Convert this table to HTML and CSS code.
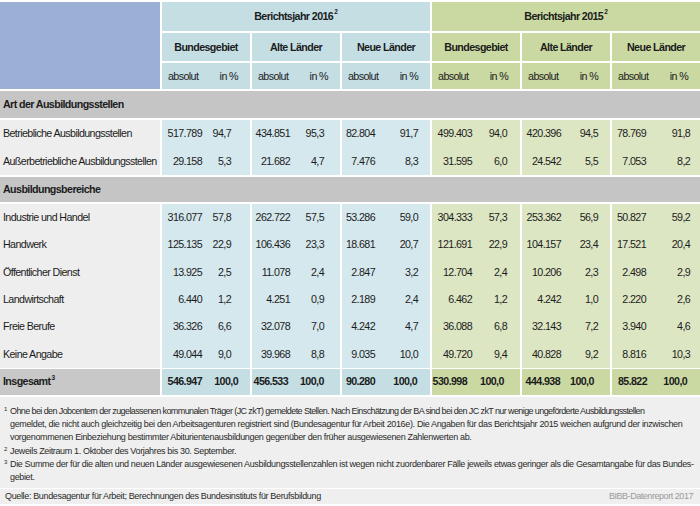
FILE: index.html
```html
<!DOCTYPE html>
<html lang="de">
<head>
<meta charset="utf-8">
<title>Ausbildungsstellen</title>
<link rel="stylesheet" href="styles.css">
</head>
<body>
<div class="page">
<table class="data">
<colgroup>
<col class="c-lab">
<col class="c-a"><col class="c-p"><col class="c-a"><col class="c-p"><col class="c-a"><col class="c-p">
<col class="c-a"><col class="c-p"><col class="c-a"><col class="c-p"><col class="c-a"><col class="c-p">
</colgroup>
<thead>
<tr class="h1">
<th rowspan="3" class="corner"></th>
<th colspan="6" class="y16">Berichtsjahr 2016<sup>2</sup></th>
<th colspan="6" class="y15">Berichtsjahr 2015<sup>2</sup></th>
</tr>
<tr class="h2">
<th colspan="2" class="y16">Bundesgebiet</th>
<th colspan="2" class="y16">Alte Länder</th>
<th colspan="2" class="y16">Neue Länder</th>
<th colspan="2" class="y15">Bundesgebiet</th>
<th colspan="2" class="y15">Alte Länder</th>
<th colspan="2" class="y15">Neue Länder</th>
</tr>
<tr class="h3">
<th class="y16 a">absolut</th><th class="y16 p">in %</th>
<th class="y16 a">absolut</th><th class="y16 p">in %</th>
<th class="y16 a">absolut</th><th class="y16 p">in %</th>
<th class="y15 a">absolut</th><th class="y15 p">in %</th>
<th class="y15 a">absolut</th><th class="y15 p">in %</th>
<th class="y15 a">absolut</th><th class="y15 p">in %</th>
</tr>
</thead>
<tbody>
<tr class="sec sec-first"><th colspan="13">Art der Ausbildungsstellen</th></tr>
<tr class="row tall">
<th>Betriebliche Ausbildungsstellen</th>
<td class="y16 a">517.789</td><td class="y16 p">94,7</td>
<td class="y16 a">434.851</td><td class="y16 p">95,3</td>
<td class="y16 a">82.804</td><td class="y16 p">91,7</td>
<td class="y15 a">499.403</td><td class="y15 p">94,0</td>
<td class="y15 a">420.396</td><td class="y15 p">94,5</td>
<td class="y15 a">78.769</td><td class="y15 p">91,8</td>
</tr>
<tr class="row tall">
<th>Außerbetriebliche Ausbildungsstellen</th>
<td class="y16 a">29.158</td><td class="y16 p">5,3</td>
<td class="y16 a">21.682</td><td class="y16 p">4,7</td>
<td class="y16 a">7.476</td><td class="y16 p">8,3</td>
<td class="y15 a">31.595</td><td class="y15 p">6,0</td>
<td class="y15 a">24.542</td><td class="y15 p">5,5</td>
<td class="y15 a">7.053</td><td class="y15 p">8,2</td>
</tr>
<tr class="sec"><th colspan="13">Ausbildungsbereiche</th></tr>
<tr class="row">
<th>Industrie und Handel</th>
<td class="y16 a">316.077</td><td class="y16 p">57,8</td>
<td class="y16 a">262.722</td><td class="y16 p">57,5</td>
<td class="y16 a">53.286</td><td class="y16 p">59,0</td>
<td class="y15 a">304.333</td><td class="y15 p">57,3</td>
<td class="y15 a">253.362</td><td class="y15 p">56,9</td>
<td class="y15 a">50.827</td><td class="y15 p">59,2</td>
</tr>
<tr class="row">
<th>Handwerk</th>
<td class="y16 a">125.135</td><td class="y16 p">22,9</td>
<td class="y16 a">106.436</td><td class="y16 p">23,3</td>
<td class="y16 a">18.681</td><td class="y16 p">20,7</td>
<td class="y15 a">121.691</td><td class="y15 p">22,9</td>
<td class="y15 a">104.157</td><td class="y15 p">23,4</td>
<td class="y15 a">17.521</td><td class="y15 p">20,4</td>
</tr>
<tr class="row">
<th>Öffentlicher Dienst</th>
<td class="y16 a">13.925</td><td class="y16 p">2,5</td>
<td class="y16 a">11.078</td><td class="y16 p">2,4</td>
<td class="y16 a">2.847</td><td class="y16 p">3,2</td>
<td class="y15 a">12.704</td><td class="y15 p">2,4</td>
<td class="y15 a">10.206</td><td class="y15 p">2,3</td>
<td class="y15 a">2.498</td><td class="y15 p">2,9</td>
</tr>
<tr class="row">
<th>Landwirtschaft</th>
<td class="y16 a">6.440</td><td class="y16 p">1,2</td>
<td class="y16 a">4.251</td><td class="y16 p">0,9</td>
<td class="y16 a">2.189</td><td class="y16 p">2,4</td>
<td class="y15 a">6.462</td><td class="y15 p">1,2</td>
<td class="y15 a">4.242</td><td class="y15 p">1,0</td>
<td class="y15 a">2.220</td><td class="y15 p">2,6</td>
</tr>
<tr class="row">
<th>Freie Berufe</th>
<td class="y16 a">36.326</td><td class="y16 p">6,6</td>
<td class="y16 a">32.078</td><td class="y16 p">7,0</td>
<td class="y16 a">4.242</td><td class="y16 p">4,7</td>
<td class="y15 a">36.088</td><td class="y15 p">6,8</td>
<td class="y15 a">32.143</td><td class="y15 p">7,2</td>
<td class="y15 a">3.940</td><td class="y15 p">4,6</td>
</tr>
<tr class="row">
<th>Keine Angabe</th>
<td class="y16 a">49.044</td><td class="y16 p">9,0</td>
<td class="y16 a">39.968</td><td class="y16 p">8,8</td>
<td class="y16 a">9.035</td><td class="y16 p">10,0</td>
<td class="y15 a">49.720</td><td class="y15 p">9,4</td>
<td class="y15 a">40.828</td><td class="y15 p">9,2</td>
<td class="y15 a">8.816</td><td class="y15 p">10,3</td>
</tr>
</tbody>
<tfoot>
<tr class="total">
<th>Insgesamt<sup>3</sup></th>
<td class="y16 a">546.947</td><td class="y16 p">100,0</td>
<td class="y16 a">456.533</td><td class="y16 p">100,0</td>
<td class="y16 a">90.280</td><td class="y16 p">100,0</td>
<td class="y15 a">530.998</td><td class="y15 p">100,0</td>
<td class="y15 a">444.938</td><td class="y15 p">100,0</td>
<td class="y15 a">85.822</td><td class="y15 p">100,0</td>
</tr>
</tfoot>
</table>

<div class="notes">
<p class="note"><span class="mark">1</span><span class="tight">Ohne bei den Jobcentern der zugelassenen kommunalen Träger (JC zkT) gemeldete Stellen. Nach Einschätzung der BA sind bei den JC zkT nur wenige ungeförderte Ausbildungsstellen</span><br>gemeldet, die nicht auch gleichzeitig bei den Arbeitsagenturen registriert sind (Bundesagentur für Arbeit 2016e). Die Angaben für das Berichtsjahr 2015 weichen aufgrund der inzwischen<br>vorgenommenen Einbeziehung bestimmter Abiturientenausbildungen gegenüber den früher ausgewiesenen Zahlenwerten ab.</p>
<p class="note"><span class="mark">2</span>Jeweils Zeitraum 1. Oktober des Vorjahres bis 30. September.</p>
<p class="note"><span class="mark">3</span>Die Summe der für die alten und neuen Länder ausgewiesenen Ausbildungsstellenzahlen ist wegen nicht zuordenbarer Fälle jeweils etwas geringer als die Gesamtangabe für das Bundes-<br>gebiet.</p>
</div>
<div class="source">
<span class="src-text">Quelle: Bundesagentur für Arbeit; Berechnungen des Bundesinstituts für Berufsbildung</span>
<span class="src-brand">BIBB-Datenreport 2017</span>
</div>
</div>
</body>
</html>
```

FILE: styles.css
```css
html, body {
  margin: 0;
  padding: 0;
  background: #ffffff;
}

body {
  font-family: "Liberation Sans Narrow", "Arial Narrow", "Liberation Sans", Arial, sans-serif;
  color: #1c1c1c;
}

.page {
  width: 700px;
  padding-top: 2px;
}

.data {
  width: 700px;
  border-collapse: separate;
  border-spacing: 0;
  table-layout: fixed;
  font-size: 10.7px;
  letter-spacing: -0.6px;
}

.c-lab { width: 160px; }
.c-a { width: 50px; }
.c-p { width: 40px; }

.data th,
.data td {
  padding: 0;
  font-weight: normal;
  white-space: nowrap;
  vertical-align: middle;
  line-height: 13px;
}

.data sup {
  font-size: 6.5px;
  line-height: 0;
  position: relative;
  top: -1px;
  margin-left: 1px;
  letter-spacing: 0;
}

/* header */
.corner {
  background: #9cb0d6;
  border-bottom: 2px solid #fff;
}

.data thead th.y16 { background: #c4dee4; }
.data thead th.y15 { background: #cad9a2; }

.h1 th,
.h2 th {
  font-weight: bold;
  text-align: center;
  border-bottom: 2px solid #fff;
}

.h1 { height: 31px; }
.h2 { height: 30px; }
.h3 { height: 28px; }

.h1 th.y16,
.h1 th.y15 {
  border-left: 2px solid #fff;
}

.h2 th,
.h3 th.a {
  border-left: 2px solid #fff;
}

.h3 th {
  border-bottom: 2px solid #fff;
}

.h3 th.a {
  text-align: left;
  padding-left: 6px;
}

.h3 th.p {
  text-align: right;
  padding-right: 12px;
}

/* section rows */
.sec th {
  background: #c5c5c5;
  font-weight: bold;
  text-align: left;
  padding-left: 3px;
  border-bottom: 2px solid #fff;
  border-top: 2px solid #fff;
}

.sec { height: 29px; }

.sec-first th {
  border-top: 0;
}

/* body rows */
.row { height: 27.3px; }
.row.tall { height: 27.5px; }

.row th,
.total th {
  text-align: left;
  padding-left: 3px;
}

.row th { background: #eeeeee; }

.row td.y16 { background: #d5e8ed; }
.row td.y15 { background: #dce6c3; }

.data td {
  text-align: right;
}

.data td.a {
  border-left: 2px solid #fff;
}

/* column alignment of values */
.row td:nth-child(2) { padding-right: 8px; }
.row td:nth-child(3) { padding-right: 19px; }
.row td:nth-child(4) { padding-right: 10px; }
.row td:nth-child(5) { padding-right: 16px; }
.row td:nth-child(6) { padding-right: 15px; }
.row td:nth-child(7) { padding-right: 12px; }
.row td:nth-child(8) { padding-right: 8px; }
.row td:nth-child(9) { padding-right: 13px; }
.row td:nth-child(10) { padding-right: 9px; }
.row td:nth-child(11) { padding-right: 12px; }
.row td:nth-child(12) { padding-right: 14px; }
.row td:nth-child(13) { padding-right: 10px; }

/* total row */
.total { height: 27px; }

.total th,
.total td {
  font-weight: bold;
  border-top: 1px solid #fff;
}

.total th { background: #c8c8c8; }
.total td.y16 { background: #c4dee4; }
.total td.y15 { background: #cad9a2; }

.total td:nth-child(2) { padding-right: 8px; }
.total td:nth-child(3) { padding-right: 12px; }
.total td:nth-child(4) { padding-right: 12px; }
.total td:nth-child(5) { padding-right: 19px; }
.total td:nth-child(6) { padding-right: 15px; }
.total td:nth-child(7) { padding-right: 13px; }
.total td:nth-child(8) { padding-right: 13px; }
.total td:nth-child(9) { padding-right: 22px; }
.total td:nth-child(10) { padding-right: 10px; }
.total td:nth-child(11) { padding-right: 22px; }
.total td:nth-child(12) { padding-right: 13px; }
.total td:nth-child(13) { padding-right: 13px; }

/* footnotes */
.notes {
  background: #efefef;
  border-top: 2px solid #fff;
  padding: 8px 0 3px 0;
  font-size: 9px;
  letter-spacing: -0.35px;
  line-height: 13.3px;
  color: #2a2a2a;
}

.note {
  margin: 0;
  padding-left: 10px;
  position: relative;
  white-space: nowrap;
}

.tight {
  letter-spacing: -0.6px;
}

.mark {
  position: absolute;
  left: 4px;
  top: -2px;
  font-size: 6px;
  letter-spacing: 0;
}

.source {
  background: #efefef;
  border-top: 1px solid #fff;
  display: flex;
  justify-content: space-between;
  align-items: center;
  height: 15px;
  padding: 0 7px 0 5px;
  font-size: 9px;
  letter-spacing: -0.35px;
  color: #2a2a2a;
  white-space: nowrap;
}

.src-brand {
  color: #9a9a9a;
  letter-spacing: -0.45px;
}
```
